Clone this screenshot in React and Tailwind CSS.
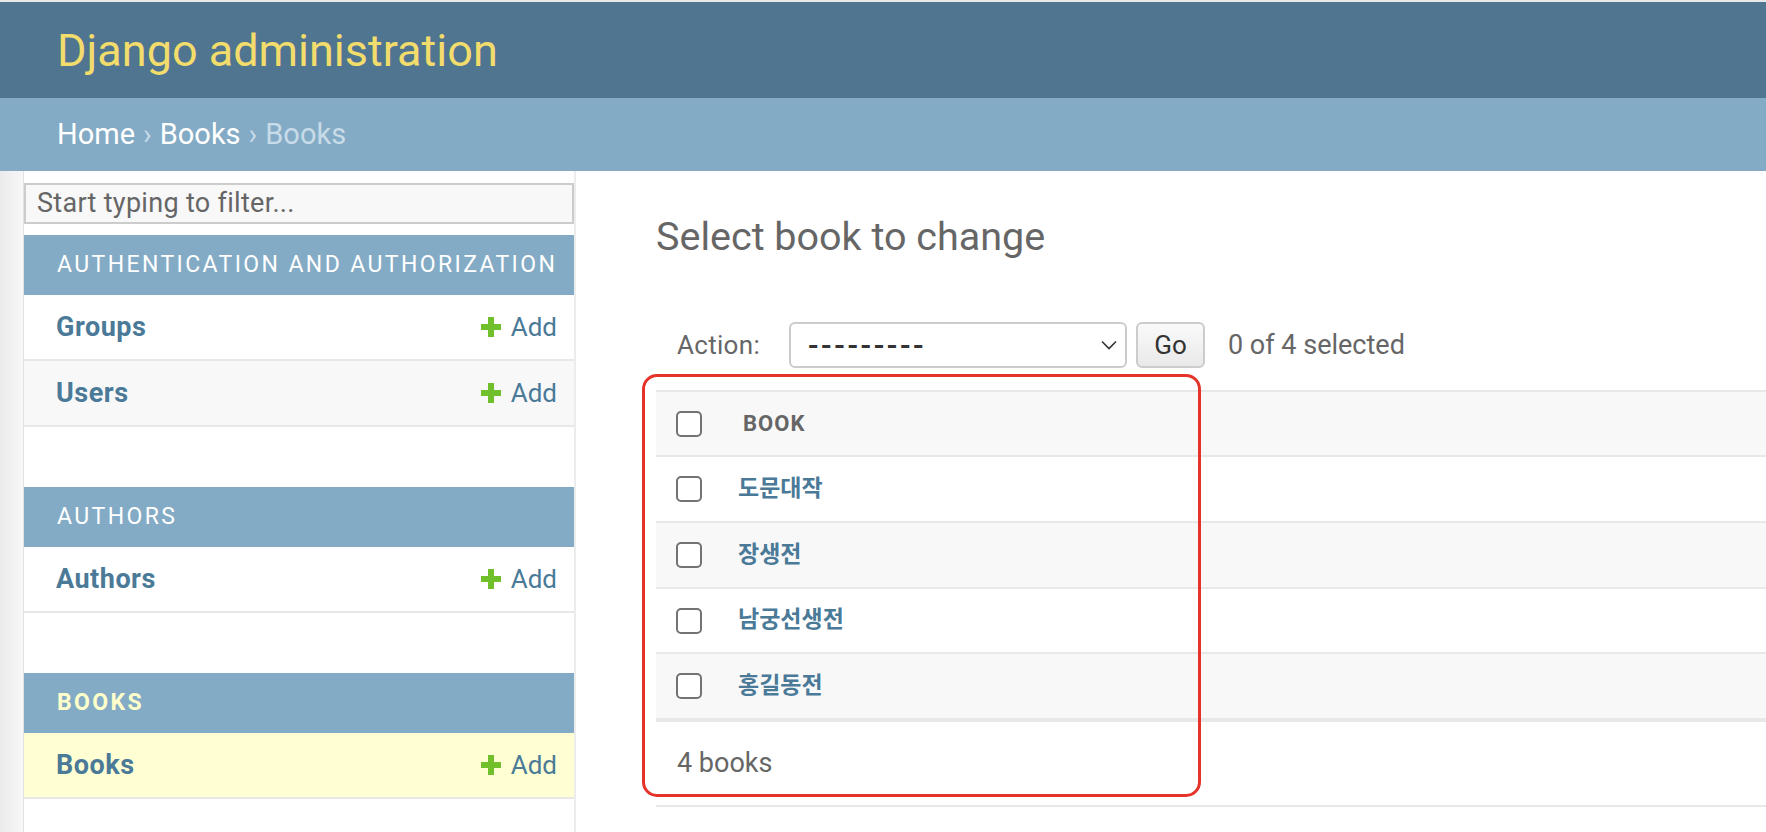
import React from 'react';

const modules = [
  { name: 'Authentication and Authorization', rows: ['Groups', 'Users'] },
  { name: 'Authors', rows: ['Authors'] },
  { name: 'Books', rows: ['Books'], current: true },
];

const books = ['도문대작', '장생전', '남궁선생전', '홍길동전'];
// heights include the bottom border (border-box)
const rowHeights = ['h-[66px]', 'h-[66px]', 'h-[65px]', 'h-[68px]'];

const PlusIcon = () => (
  <svg width="20" height="20" viewBox="0 0 20 20" className="shrink-0">
    <path d="M7 0h6v7h7v6h-7v7H7v-7H0V7h7z" fill="#70bf2b" />
  </svg>
);

const Checkbox = () => (
  <span className="block w-[26px] h-[26px] shrink-0 rounded-[5px] border-2 border-[#737373] bg-white" />
);

const Sidebar = () => (
  <div className="flex shrink-0">
    {/* collapse toggle strip */}
    <div className="w-[24px] border-r border-[#e2e2e2] bg-gradient-to-r from-[#ebebeb] to-[#f7f7f7]" />
    <nav className="w-[552px] border-r-2 border-[#ececec] pt-[12px]">
      <div className="h-[41px] border-2 border-[#cccccc] bg-[#f8f8f8] flex items-center pl-[11px] text-[27px] tracking-[0.3px] text-[#666]">
        Start typing to filter...
      </div>
      <div className="mt-[11px]">
        {modules.map(mod => (
          <div key={mod.name} className="mb-[60px]">
            <div className="h-[60px] bg-[#84abc5] flex items-center pl-[33px]">
              <span
                className={
                  mod.current
                    ? 'text-[23px] uppercase tracking-[2.4px] font-bold text-[#ffffcc]'
                    : 'text-[23px] uppercase tracking-[2.4px] text-white'
                }
              >
                {mod.name}
              </span>
            </div>
            {mod.rows.map((row, i) => (
              <div
                key={row}
                className={
                  'h-[66px] border-b-2 border-[#e8e8e8] flex items-center justify-between pl-[32px] pr-[17px] ' +
                  (mod.current ? 'bg-[#ffffd3]' : i % 2 === 1 ? 'bg-[#f8f8f8]' : 'bg-white')
                }
              >
                <span className="text-[27px] tracking-[0.5px] font-bold text-[#4a7a98]">{row}</span>
                <span className="flex items-center gap-[10px] text-[26px] text-[#4a7a98]">
                  <PlusIcon />
                  Add
                </span>
              </div>
            ))}
          </div>
        ))}
      </div>
    </nav>
  </div>
);

const ChangeList = () => (
  <main className="flex-1 pl-[80px] pt-[46px] min-w-0">
    <h1 className="text-[39.5px] leading-none h-[39px] font-normal text-[#666]">Select book to change</h1>

    <div className="mt-[66px] h-[46px] flex items-center pl-[21px] text-[26px] text-[#666]">
      <span className="tracking-[0.3px]">Action:</span>
      <div className="ml-[29px] w-[338px] h-[46px] rounded-[6px] border-2 border-[#cccccc] bg-white flex items-center justify-between pl-[17px] pr-[8px]">
        <span className="text-[31px] leading-none text-[#333] font-medium tracking-[2.6px]">---------</span>
        <svg width="16" height="10" viewBox="0 0 16 10">
          <path d="M1 1.5l7 7 7-7" fill="none" stroke="#333" strokeWidth="1.6" />
        </svg>
      </div>
      <button className="ml-[9px] w-[69px] h-[46px] rounded-[6px] border-2 border-[#cccccc] bg-gradient-to-b from-[#fafafa] to-[#e9e9e9] text-[26px] text-[#333]">
        Go
      </button>
      <span className="ml-[23px] text-[27px]">0 of 4 selected</span>
    </div>

    <div className="mt-[22px] border-t-2 border-[#e8e8e8]">
      <div className="h-[65px] bg-[#f8f8f8] border-b-2 border-[#e8e8e8] flex items-center pl-[20px]">
        <Checkbox />
        <span className="ml-[41px] text-[22px] font-bold uppercase tracking-[1px] text-[#666]">Book</span>
      </div>
      {books.map((title, i) => (
        <div
          key={title}
          className={
            'flex items-center pl-[20px] ' +
            rowHeights[i] +
            (i === books.length - 1 ? ' border-b-4 ' : ' border-b-2 ') +
            'border-[#e8e8e8] ' +
            (i % 2 === 1 ? 'bg-[#f8f8f8]' : 'bg-white')
          }
        >
          <Checkbox />
          <span className="ml-[36px] text-[23px] font-bold text-[#4a7a98]">{title}</span>
        </div>
      ))}
      <div className="h-[85px] border-b-2 border-[#e8e8e8] flex items-center pl-[21px] text-[27px] text-[#666]">
        4 books
      </div>
    </div>
  </main>
);

export default function App() {
  return (
    <div className="relative w-[1766px] h-[832px] overflow-hidden bg-white font-[Roboto,'Noto_Sans_CJK_KR',sans-serif]">
      <div className="h-[2px] bg-[#e8e8e8]" />
      <header className="h-[96px] bg-[#4f7591] flex items-center pl-[57px]">
        <span className="text-[45px] leading-none font-normal text-[#f2dc6c]">Django administration</span>
      </header>
      <div className="h-[73px] bg-[#84abc5] flex items-center pl-[57px] text-[29px] leading-none">
        <span className="text-white">Home</span>
        <span className="text-[#c7dbe8] mx-[8px]">›</span>
        <span className="text-white">Books</span>
        <span className="text-[#c7dbe8] mx-[8px]">›</span>
        <span className="text-[#c7dbe8]">Books</span>
      </div>
      <div className="flex h-[661px]">
        <Sidebar />
        <ChangeList />
      </div>

      {/* red annotation frame */}
      <div className="absolute left-[642px] top-[374px] w-[559px] h-[423px] border-[3px] border-[#e5332a] rounded-[15px] pointer-events-none" />
    </div>
  );
}
